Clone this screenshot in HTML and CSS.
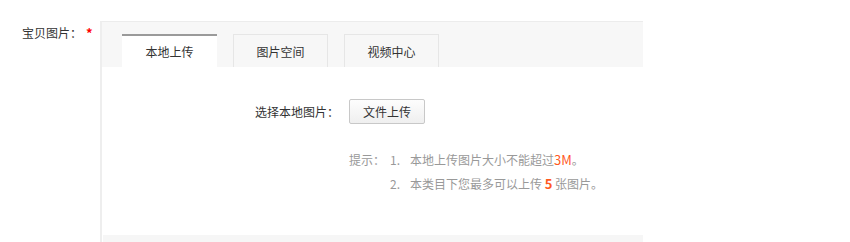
FILE: index.html
```html
<!DOCTYPE html>
<html>
<head>
<meta charset="utf-8">
<link rel="stylesheet" href="styles.css">
</head>
<body>
<div class="row">
  <div class="field-label">宝贝图片：<span class="req">*</span></div>
  <div class="panel">
    <div class="tabs">
      <div class="tab active">本地上传</div>
      <div class="tab">图片空间</div>
      <div class="tab">视频中心</div>
    </div>
    <div class="content">
      <div class="upload-row">
        <span class="upload-label">选择本地图片：</span>
        <button class="btn">文件上传</button>
      </div>
      <div class="tips">
        <span class="tips-head">提示：</span>
        <ol class="tips-list">
          <li><span class="num">1.</span>本地上传图片大小不能超过<span class="hl">3M</span>。</li>
          <li><span class="num">2.</span>本类目下您最多可以上传 <b class="hl">5</b> 张图片。</li>
        </ol>
      </div>
    </div>
    <div class="footer"></div>
  </div>
</div>
</body>
</html>
```

FILE: styles.css
```css
html, body {
  margin: 0;
  padding: 0;
  background: #fff;
}
body {
  font-family: "Noto Sans CJK SC", "Microsoft YaHei", sans-serif;
  font-size: 12px;
  color: #333;
}
.row {
  display: flex;
  padding-top: 21px;
}
.field-label {
  padding-left: 22px;
  padding-top: 5px;
  line-height: 14px;
  color: #333;
  box-sizing: border-box;
  width: 100px;
}
.req {
  color: #f00;
  font-weight: bold;
  font-size: 13px;
  margin-left: 4px;
}
.panel {
  width: 543px;
  border-top: 1px solid #ececec;
  border-left: 2px solid #eeeeee;
  box-sizing: border-box;
  display: flex;
  flex-direction: column;
  height: 221px;
}
.tabs {
  background: #f7f7f7;
  display: flex;
  gap: 16px;
  padding: 12px 0 0 20px;
  height: 45px;
  box-sizing: border-box;
}
.tab {
  width: 95px;
  height: 33px;
  box-sizing: border-box;
  border: 1px solid #e6e6e6;
  border-bottom: none;
  background: #f7f7f7;
  text-align: center;
  line-height: 34px;
  color: #333;
}
.tab.active {
  background: #fff;
  border: none;
  border-top: 2px solid #9a9a9a;
  line-height: 32px;
}
.content {
  flex: 1;
  background: #fff;
  padding-left: 153px;
}
.upload-row {
  display: flex;
  align-items: center;
  margin-top: 32px;
  height: 25px;
}
.upload-label {
  color: #333;
  width: 94px;
}
.btn {
  font-family: inherit;
  font-size: 12px;
  color: #333;
  height: 25px;
  width: 76px;
  padding: 0;
  border: 1px solid #c8c8c8;
  border-radius: 2px;
  background: linear-gradient(#fdfdfd, #efefef);
}
.tips {
  display: flex;
  margin-top: 24px;
  margin-left: 94px;
  color: #999;
  line-height: 24px;
}
.tips-head {
  width: 41px;
}
.tips-list {
  list-style: none;
  margin: 0;
  padding: 0;
}
.num {
  display: inline-block;
  width: 20px;
}
.hl {
  color: #ff5a1f;
  font-size: 13px;
}
b.hl {
  font-weight: bold;
}
.footer {
  height: 7px;
  background: #f6f6f6;
  margin-left: 1px;
}
```
